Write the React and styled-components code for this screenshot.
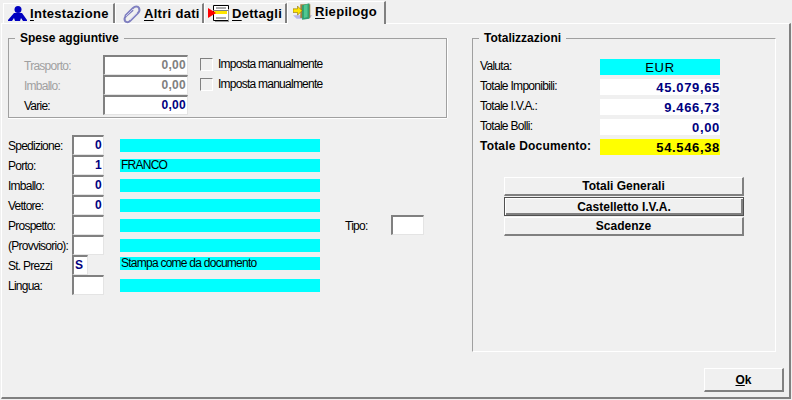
import React from 'react';
import styled, { createGlobalStyle } from 'styled-components';

const GlobalStyle = createGlobalStyle`
  html, body {
    margin: 0;
    padding: 0;
    background: #f0f0f0;
  }
  * {
    box-sizing: border-box;
  }
`;

const Window = styled.div`
  width: 792px;
  height: 400px;
  background: #f0f0f0;
  display: flex;
  flex-direction: column;
  font-family: 'Liberation Sans', Arial, sans-serif;
  font-size: 12px;
  letter-spacing: -0.75px;
  color: #000;
  overflow: hidden;
`;

const TabBar = styled.div`
  height: 23px;
  display: flex;
  align-items: flex-end;
  padding-left: 3px;
  position: relative;
  z-index: 1;
`;

const Tab = styled.div`
  width: ${(props) => props.$width}px;
  height: ${(props) => (props.$active ? 23 : 20)}px;
  margin-bottom: ${(props) => (props.$active ? -1 : 0)}px;
  display: flex;
  align-items: center;
  gap: 2px;
  padding-left: ${(props) => props.$pad}px;
  padding-bottom: ${(props) => (props.$active ? 3 : 0)}px;
  background: #f0f0f0;
  border-top: 1px solid #fff;
  border-left: 1px solid #fff;
  border-right: 2px solid #808080;
  font-weight: bold;
  font-size: 13px;
  letter-spacing: 0.3px;
  white-space: nowrap;
  svg {
    flex: none;
  }
  u {
    text-underline-offset: 2px;
  }
`;

const Panel = styled.div`
  flex: 1;
  margin: 0 1px 1px 1px;
  border-top: 1px solid #fff;
  border-left: 1px solid #fff;
  border-right: 2px solid #808080;
  border-bottom: 2px solid #808080;
  padding: 7px 5px 0 6px;
  display: flex;
  flex-direction: column;
`;

const Body = styled.div`
  display: flex;
  gap: 25px;
`;

const LeftCol = styled.div`
  width: 439px;
  display: flex;
  flex-direction: column;
`;

const Group = styled.fieldset`
  margin: 0;
  min-width: 0;
  width: ${(props) => props.$width}px;
  height: ${(props) => props.$height}px;
  padding: 0;
  border: 1px solid #a0a0a0;
  border-bottom-color: ${(props) => (props.$etched ? '#fff' : '#a0a0a0')};
  border-right-color: ${(props) => (props.$etched ? '#fff' : '#a0a0a0')};
  box-shadow: ${(props) => (props.$etched ? 'none' : '0 1px 0 #fff, 1px 0 0 #fff')};
`;

const Legend = styled.legend`
  margin-left: 6px;
  padding: 0 5px;
  height: 14px;
  line-height: 14px;
  font-weight: bold;
  font-size: 12px;
  letter-spacing: 0;
`;

const ExtraRows = styled.div`
  padding: 10px 0 0 15px;
`;

const ExtraRow = styled.div`
  height: 20px;
  display: flex;
  align-items: flex-start;
`;

const ExtraLabel = styled.div`
  width: 79px;
  line-height: 20px;
  padding-top: 1px;
  color: ${(props) => (props.$disabled ? '#a0a0a0' : '#000')};
`;

const Field = styled.div`
  width: ${(props) => props.$width}px;
  height: 20px;
  flex: none;
  background: #fff;
  border-style: solid;
  border-width: 2px 1px 1px 2px;
  border-color: #808080 #e4e4e4 #e4e4e4 #808080;
  text-align: ${(props) => (props.$left ? 'left' : 'right')};
  padding: 0 1px;
  line-height: 17px;
  font-weight: bold;
  font-size: 12px;
  letter-spacing: 0.3px;
  color: ${(props) => (props.$disabled ? '#808080' : '#000080')};
`;

const Check = styled.div`
  width: 13px;
  height: 13px;
  margin: 3px 5px 0 12px;
  background: #f0f0f0;
  border-style: solid;
  border-width: 1px;
  border-color: #808080 #fff #fff #808080;
`;

const CheckLabel = styled.div`
  line-height: 18px;
`;

const CodeList = styled.div`
  margin-top: 17px;
  display: flex;
  flex-direction: column;
`;

const CodeRow = styled.div`
  height: 20px;
  display: flex;
  align-items: flex-start;
`;

const CodeLabel = styled.div`
  width: 64px;
  line-height: 20px;
  padding-top: 1px;
  white-space: nowrap;
`;

const CodeSlot = styled.div`
  width: 32px;
  flex: none;
`;

const Description = styled.div`
  width: 200px;
  height: 13px;
  flex: none;
  margin-left: 16px;
  margin-top: ${(props) => (props.$raised ? 2 : 4)}px;
  background: #00ffff;
  line-height: 13px;
  padding-left: 1px;
`;

const TipoLabel = styled.div`
  width: 46px;
  margin-left: 25px;
  line-height: 20px;
  padding-top: 1px;
`;

const Summary = styled.div`
  display: grid;
  grid-template-columns: 120px 120px;
  grid-auto-rows: 20px;
  margin: 14px 0 0 7px;
`;

const SumLabel = styled.div`
  line-height: 14px;
  font-weight: ${(props) => (props.$strong ? 'bold' : 'normal')};
  letter-spacing: ${(props) => (props.$strong ? '0.2px' : '-0.7px')};
  white-space: nowrap;
`;

const SumValue = styled.div`
  height: 16px;
  line-height: 17px;
  background: ${(props) => props.$bg};
  color: ${(props) => props.$color};
  text-align: ${(props) => props.$align || 'right'};
  font-weight: ${(props) => (props.$align ? 'normal' : 'bold')};
  font-size: 13px;
  letter-spacing: 0.65px;
`;

const Buttons = styled.div`
  margin: 18px 0 0 31px;
  width: 240px;
  display: flex;
  flex-direction: column;
  gap: 1px;
`;

const Button = styled.div`
  width: ${(props) => props.$width || 240}px;
  height: ${(props) => props.$height || 19}px;
  display: flex;
  align-items: center;
  justify-content: center;
  background: #f0f0f0;
  border-style: solid;
  border-width: ${(props) => (props.$default ? '1px' : '1px 2px 2px 1px')};
  border-color: ${(props) => (props.$default ? '#505050' : '#fff #808080 #808080 #fff')};
  box-shadow: ${(props) => (props.$default ? 'inset 1px 1px 0 #fff, inset -2px -2px 0 #808080' : 'none')};
  font-weight: bold;
  font-size: 12px;
  letter-spacing: 0;
`;

const Footer = styled.div`
  margin-top: 16px;
  display: flex;
  justify-content: flex-end;
`;

const PersonIcon = () => (
  <svg width="20" height="16" viewBox="0 0 20 16">
    <circle cx="10" cy="3.5" r="3.5" fill="#0000c0" />
    <path d="M6 7h8l5 7v1h-4l-2-3-1 3H7l-1-3-2 3H0v-1z" fill="#0000c0" />
  </svg>
);

const ClipIcon = () => (
  <svg width="20" height="20" viewBox="0 0 20 20">
    <path
      d="M3 12L11 4C13 2 16 2 17 4C18 6 17 8 16 9L8 17C6 19 4 18 3 17C2 15 2 14 4 12L11 6"
      fill="none"
      stroke="#8080c0"
      strokeWidth="2"
    />
    <path d="M4 12L11 5M8 16L15 9" stroke="#d8d8f4" strokeWidth="0.8" />
  </svg>
);

const DocIcon = () => (
  <svg width="22" height="17" viewBox="0 0 22 17">
    <path d="M5.5.5h15v15h-15z" fill="#fff" stroke="#000" />
    <path d="M8 3h10M8 13h10" stroke="#555" />
    <path d="M5 5h15v1H5z" fill="#808080" />
    <path d="M6 6h13v3H6z" fill="#ffe600" />
    <path d="M0 3l8 5-8 5z" fill="#ff0000" />
    <path d="M20 16H7v1h14V4h-1z" fill="#999" />
  </svg>
);

const DoorIcon = () => (
  <svg width="20" height="18" viewBox="0 0 22 19">
    <path d="M0 13l4 4h14l3-4z" fill="#b8b8e8" />
    <path d="M8 1h11v15H8z" fill="#a08040" />
    <path d="M10 2l8-2v17l-8 1z" fill="#30a070" />
    <path d="M12 2l4-1v14l-4 1z" fill="#50c890" />
    <path d="M0 6h5V3l5 5-5 5v-3H0z" fill="#ffe600" stroke="#806000" strokeWidth="0.6" />
  </svg>
);

const tabs = [
  { key: 'I', rest: 'ntestazione', width: 112, pad: 4, icon: <PersonIcon /> },
  { key: 'A', rest: 'ltri dati', width: 89, pad: 6, icon: <ClipIcon /> },
  { key: 'D', rest: 'ettagli', width: 83, pad: 3, icon: <DocIcon /> },
  { key: 'R', rest: 'iepilogo', width: 99, pad: 5, icon: <DoorIcon />, active: true },
];

const codes = [
  { label: 'Spedizione:', code: '0', width: 32 },
  { label: 'Porto:', code: '1', width: 32, text: 'FRANCO' },
  { label: 'Imballo:', code: '0', width: 32 },
  { label: 'Vettore:', code: '0', width: 32 },
  { label: 'Prospetto:', code: '', width: 32, tipo: true },
  { label: '(Provvisorio):', code: '', width: 32 },
  { label: 'St. Prezzi', code: 'S', width: 16, text: 'Stampa come da documento', raised: true, left: true },
  { label: 'Lingua:', code: '', width: 32 },
];

const totals = [
  { label: 'Valuta:', value: 'EUR', bg: '#00ffff', color: '#000', align: 'center' },
  { label: 'Totale Imponibili:', value: '45.079,65', bg: '#fff', color: '#000080' },
  { label: 'Totale I.V.A.:', value: '9.466,73', bg: '#fff', color: '#000080' },
  { label: 'Totale Bolli:', value: '0,00', bg: '#fff', color: '#000080' },
  { label: 'Totale Documento:', value: '54.546,38', bg: '#ffff00', color: '#000', strong: true },
];

const App = () => {
  return (
    <Window>
      <GlobalStyle />
      <TabBar>
        {tabs.map((tab) => (
          <Tab key={tab.key} $width={tab.width} $pad={tab.pad} $active={tab.active}>
            {tab.icon}
            <span>
              <u>{tab.key}</u>
              {tab.rest}
            </span>
          </Tab>
        ))}
      </TabBar>
      <Panel>
        <Body>
          <LeftCol>
            <Group $width={439} $height={87}>
              <Legend>Spese aggiuntive</Legend>
              <ExtraRows>
                <ExtraRow>
                  <ExtraLabel $disabled>Trasporto:</ExtraLabel>
                  <Field $width={85} $disabled>0,00</Field>
                  <Check />
                  <CheckLabel>Imposta manualmente</CheckLabel>
                </ExtraRow>
                <ExtraRow>
                  <ExtraLabel $disabled>Imballo:</ExtraLabel>
                  <Field $width={85} $disabled>0,00</Field>
                  <Check />
                  <CheckLabel>Imposta manualmente</CheckLabel>
                </ExtraRow>
                <ExtraRow>
                  <ExtraLabel>Varie:</ExtraLabel>
                  <Field $width={85}>0,00</Field>
                </ExtraRow>
              </ExtraRows>
            </Group>
            <CodeList>
              {codes.map((row) => (
                <CodeRow key={row.label}>
                  <CodeLabel>{row.label}</CodeLabel>
                  <CodeSlot>
                    <Field $width={row.width} $left={row.left}>{row.code}</Field>
                  </CodeSlot>
                  <Description $raised={row.raised}>{row.text}</Description>
                  {row.tipo && (
                    <>
                      <TipoLabel>Tipo:</TipoLabel>
                      <Field $width={33} />
                    </>
                  )}
                </CodeRow>
              ))}
            </CodeList>
          </LeftCol>
          <Group $width={304} $height={321} $etched>
            <Legend>Totalizzazioni</Legend>
            <Summary>
              {totals.map((row) => (
                <React.Fragment key={row.label}>
                  <SumLabel $strong={row.strong}>{row.label}</SumLabel>
                  <SumValue $bg={row.bg} $color={row.color} $align={row.align}>
                    {row.value}
                  </SumValue>
                </React.Fragment>
              ))}
            </Summary>
            <Buttons>
              <Button>Totali Generali</Button>
              <Button $default>Castelletto I.V.A.</Button>
              <Button>Scadenze</Button>
            </Buttons>
          </Group>
        </Body>
        <Footer>
          <Button $width={80} $height={24}>
            <span>
              <u>O</u>k
            </span>
          </Button>
        </Footer>
      </Panel>
    </Window>
  );
};

export default App;
